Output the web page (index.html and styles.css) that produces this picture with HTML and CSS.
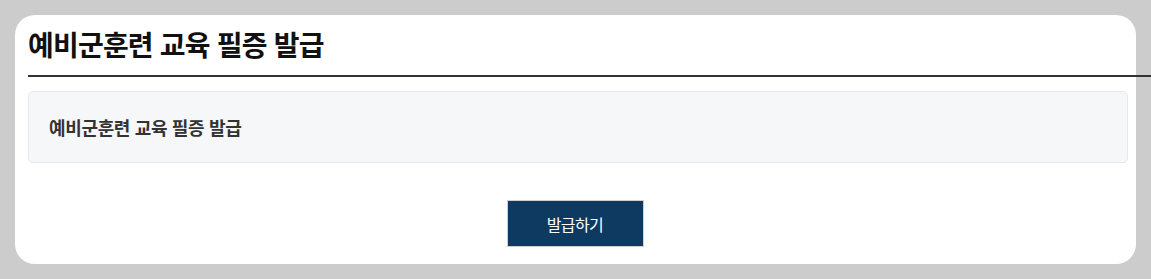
FILE: index.html
```html
<!DOCTYPE html>
<html lang="ko">
<head>
<meta charset="utf-8">
<link rel="stylesheet" href="styles.css">
</head>
<body>
<div class="card">
  <h1 class="title">예비군훈련 교육 필증 발급</h1>
  <div class="info-box">
    <p class="info-text">예비군훈련 교육 필증 발급</p>
  </div>
  <div class="actions">
    <button class="btn-issue" type="button">발급하기</button>
  </div>
</div>
</body>
</html>
```
FILE: styles.css
```css
html, body {
  margin: 0;
  padding: 0;
}
body {
  background: #cccccc;
  font-family: "Noto Sans CJK KR", "Noto Sans", sans-serif;
  padding: 15px 15px 15px 15px;
  overflow: hidden;
}
.card {
  background: #ffffff;
  border-radius: 20px;
  width: 1121px;
  height: 249px;
  box-sizing: border-box;
  padding: 0 8px 0 13px;
}
.title {
  margin: 0 -30px 0 0;
  padding: 11px 0 0 0;
  height: 49px;
  box-sizing: content-box;
  border-bottom: 2px solid #333333;
  font-size: 28px;
  font-weight: 700;
  letter-spacing: -0.8px;
  line-height: 36px;
  color: #111111;
}
.info-box {
  margin-top: 14px;
  height: 72px;
  box-sizing: border-box;
  background: #f6f7f9;
  border: 1px solid #e6e8ec;
  border-radius: 5px;
  display: flex;
  align-items: center;
  padding-left: 20px;
}
.info-text {
  margin: 0;
  font-size: 18px;
  font-weight: 700;
  letter-spacing: -0.35px;
  color: #333333;
}
.actions {
  display: flex;
  justify-content: center;
  padding-top: 37px;
}
.btn-issue {
  width: 137px;
  height: 47px;
  background: #0e3a62;
  border: 1px solid #d0d0d0;
  color: #ffffff;
  font-family: "Noto Sans CJK KR", "Noto Sans", sans-serif;
  font-size: 16px;
  letter-spacing: -0.6px;
  padding: 0;
  margin-left: -6px;
}
```
